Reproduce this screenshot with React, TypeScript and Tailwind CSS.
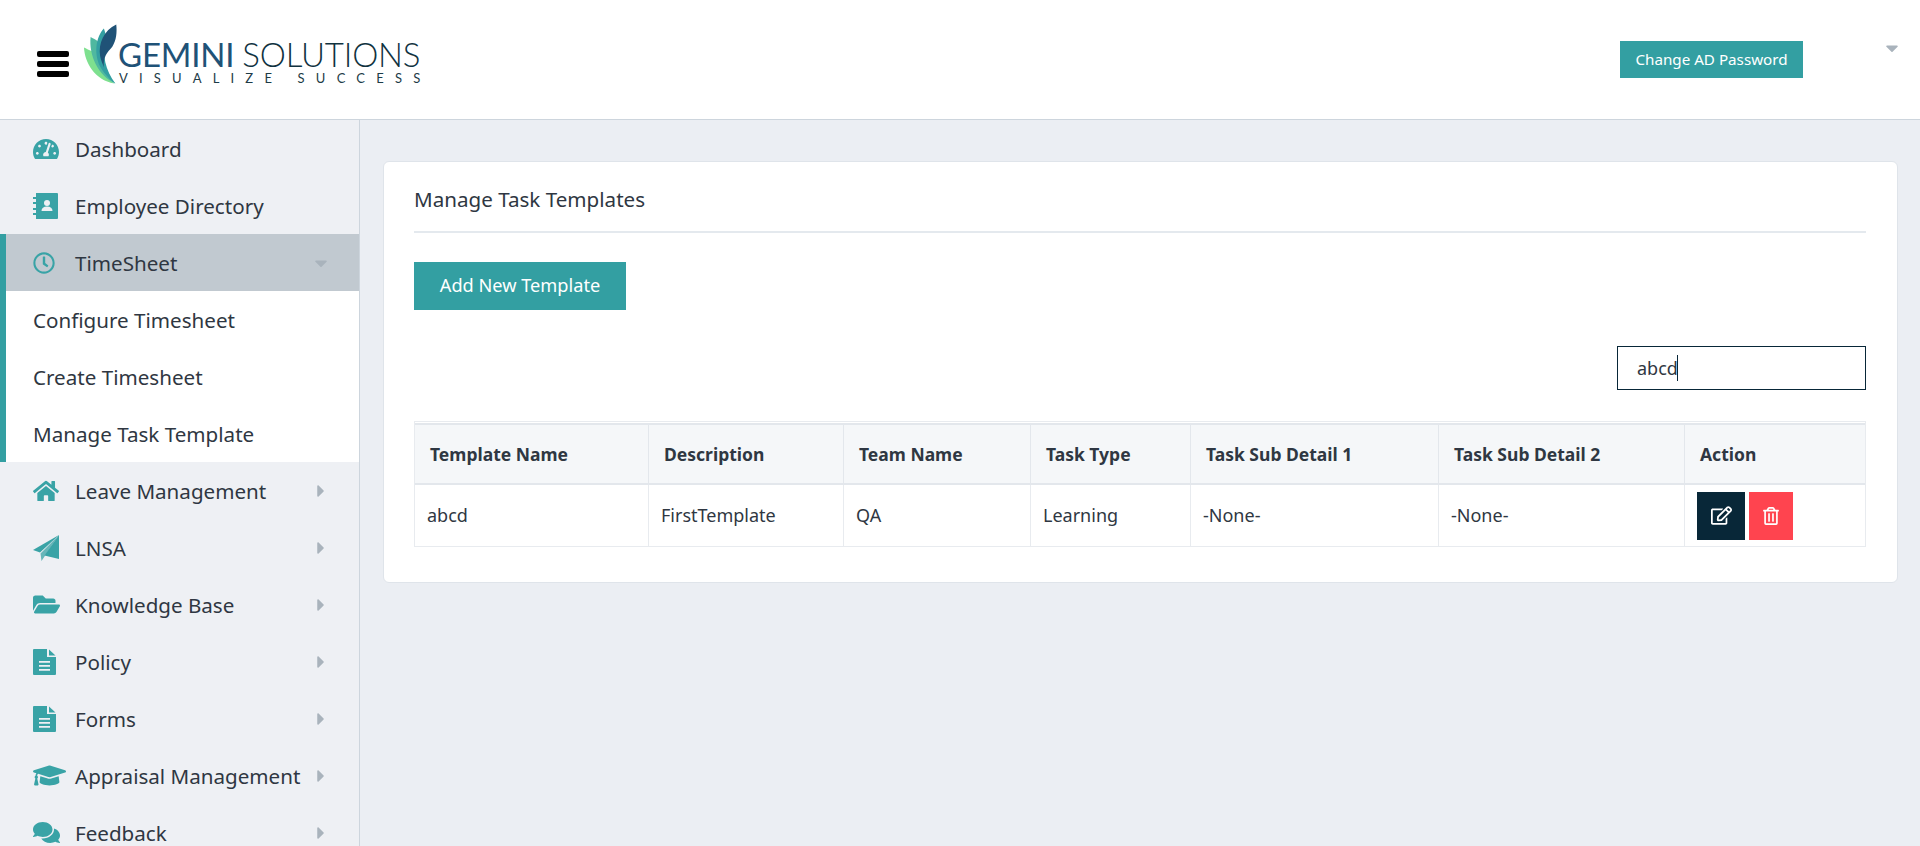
import { ReactNode } from "react";
import {
  FaCaretDown,
  FaCaretRight,
  FaComments,
  FaFolderOpen,
  FaGraduationCap,
  FaHome,
  FaRegClock,
  FaRegEdit,
  FaRegTrashAlt,
  FaTachometerAlt,
} from "react-icons/fa";

const COLUMNS = [
  { name: "Template Name", value: "abcd", width: "w-[234px]" },
  { name: "Description", value: "FirstTemplate", width: "w-[195px]" },
  { name: "Team Name", value: "QA", width: "w-[187px]" },
  { name: "Task Type", value: "Learning", width: "w-[160px]" },
  { name: "Task Sub Detail 1", value: "-None-", width: "w-[248px]" },
  { name: "Task Sub Detail 2", value: "-None-", width: "w-[246px]" },
];

function DirectoryIcon() {
  return (
    <svg viewBox="0 0 25 26" className="h-[26px] w-[25px]" fill="currentColor">
      <path d="M3 0H24a1 1 0 0 1 1 1V25a1 1 0 0 1-1 1H3z" />
      <path d="M0 4h5v2H0zM0 9h5v2H0zM0 15h5v2H0zM0 20h5v2H0z" />
      <circle cx="14" cy="10" r="3" fill="#eef0f4" />
      <path d="M8.5 18c0-3 2-4.5 5.5-4.5s5.5 1.5 5.5 4.5z" fill="#eef0f4" />
    </svg>
  );
}

function PlaneIcon() {
  return (
    <svg viewBox="0 0 26 26" className="h-[26px] w-[26px]" fill="currentColor">
      <path d="M26 0L0 15l7 2.5z" />
      <path d="M26 0L11.5 20.5 26 24z" />
      <path d="M26 0L7.5 18.5 8.5 26l3-4.5z" opacity="0.75" />
    </svg>
  );
}

function FileIcon() {
  return (
    <svg viewBox="0 0 23 26" className="h-[26px] w-[23px]" fill="currentColor">
      <path d="M1 0H14V8H23V25a1 1 0 0 1-1 1H1a1 1 0 0 1-1-1V1a1 1 0 0 1 1-1z" />
      <path d="M16 0.5L22.5 6.5H16z" />
      <path d="M6 12h11v1.8H6zM6 16h11v1.8H6zM6 20h11v1.8H6z" fill="#eef0f4" />
    </svg>
  );
}

function NavItem({ icon, label, open, plain }: { icon: ReactNode; label: string; open?: boolean; plain?: boolean }) {
  return (
    <div className={`flex h-[57px] shrink-0 items-center pl-[33px] pr-[28px] ${open ? "border-l-[6px] border-[#339fa2] bg-[#c1c9d0] !pl-[27px]" : ""}`}>
      <span className="flex w-[42px] shrink-0 items-center text-[#39a3a6]">{icon}</span>
      <span className="relative top-px flex-1 whitespace-nowrap text-[#2f3742]">{label}</span>
      {plain ? null : open ? <FaCaretDown className="text-[20px] text-[#a9b3bc]" /> : <FaCaretRight className="text-[20px] text-[#a9b3bc]" />}
    </div>
  );
}

function SubItem({ label }: { label: string }) {
  return <div className="flex h-[57px] items-center pl-[27px] pt-px text-[#2f3742]">{label}</div>;
}

function Logo() {
  return (
    <div className="flex items-start">
      <svg viewBox="0 0 40 64" className="mt-[23px] h-[64px] w-[38px] shrink-0">
        <path d="M1 24C2 40 12 58 33 62C22 54 13 42 10 28C7 27 3 25 1 24Z" fill="#7ee08f" />
        <path d="M8 13C6 32 16 54 34 62C24 50 17 36 16 18C14 16 10 14 8 13Z" fill="#4fb8a0" />
        <path d="M22 4C14 12 11 30 18 44C22 51 28 58 34 62C24 48 19 32 25 14C24 10 23 7 22 4Z" fill="#339fa2" />
        <path d="M35 0C22 6 16 20 18 33C19 38 21 42 22 45C21 34 25 30 31 23C35 17 36 8 35 0Z" fill="#1f5277" />
      </svg>
      <div className="ml-[-3px] mt-[38px] flex flex-col font-['Lato',sans-serif]">
        <div className="flex h-[32px] items-center whitespace-nowrap text-[33px] leading-none tracking-[-0.2px]">
          <span className="font-normal text-[#1f5277]">GEMINI</span>
          <span className="ml-[8px] font-light text-[#10323f]">SOLUTIONS</span>
        </div>
        <div className="mt-[1px] whitespace-nowrap pl-[1px] text-[13px] leading-[15px] tracking-[11.2px] text-[#1d3b47]">VISUALIZE SUCCESS</div>
      </div>
    </div>
  );
}

export default function App() {
  return (
    <div className="flex h-screen flex-col overflow-hidden bg-[#ebeef3] font-['Noto_Sans',sans-serif] text-[20.6px]">
      <header className="flex h-[120px] shrink-0 items-start border-b border-[#cdd5dd] bg-white">
        <div className="mt-[51px] ml-[37px] mr-[14px] flex w-[32px] shrink-0 flex-col gap-[4px]">
          <span className="h-[6px] rounded-[2px] bg-black" />
          <span className="h-[6px] rounded-[2px] bg-black" />
          <span className="h-[6px] rounded-[2px] bg-black" />
        </div>
        <Logo />
        <button className="ml-auto mt-[41px] h-[37px] w-[183px] bg-[#339fa2] text-[15.2px] text-white">Change AD Password</button>
        <FaCaretDown className="mr-[18px] ml-[79px] mt-[38px] text-[20px] text-[#a9b3bc]" />
      </header>

      <div className="flex min-h-0 flex-1">
        <aside className="flex w-[360px] shrink-0 flex-col border-r border-[#cdd5dd] bg-[#eef0f4]">
          <NavItem icon={<FaTachometerAlt className="text-[26px]" />} label="Dashboard" plain />
          <NavItem icon={<DirectoryIcon />} label="Employee Directory" plain />
          <NavItem icon={<FaRegClock className="text-[22px]" />} label="TimeSheet" open />
          <div className="shrink-0 border-l-[6px] border-[#339fa2] bg-white">
            <SubItem label="Configure Timesheet" />
            <SubItem label="Create Timesheet" />
            <SubItem label="Manage Task Template" />
          </div>
          <NavItem icon={<FaHome className="text-[26px]" />} label="Leave Management" />
          <NavItem icon={<PlaneIcon />} label="LNSA" />
          <NavItem icon={<FaFolderOpen className="text-[27px]" />} label="Knowledge Base" />
          <NavItem icon={<FileIcon />} label="Policy" />
          <NavItem icon={<FileIcon />} label="Forms" />
          <NavItem icon={<FaGraduationCap className="text-[33px]" />} label="Appraisal Management" />
          <NavItem icon={<FaComments className="text-[27px]" />} label="Feedback" />
        </aside>

        <main className="flex-1 pl-[23px] pr-[22px] pt-[41px]">
          <section className="h-[422px] rounded-[6px] border border-[#dfe4ea] bg-white pl-[30px] pr-[31px] pt-[20px]">
            <h1 className="flex h-[51px] items-center border-b-2 border-[#e4e9ee] pb-[14px] text-[20.6px] font-normal text-[#2f3742]">Manage Task Templates</h1>
            <button className="mt-[29px] block h-[48px] w-[212px] bg-[#339fa2] text-[18.2px] text-white">Add New Template</button>
            <div className="mt-[36px] flex justify-end">
              <div className="relative">
                <input
                  readOnly
                  value="abcd"
                  className="h-[44px] w-[249px] border border-[#082738] bg-white pl-[19px] text-[18px] text-[#2f3742] outline-none"
                />
                <span className="absolute left-[60px] top-[9px] h-[26px] w-px bg-[#082738]" />
              </div>
            </div>
            <table className="mt-[31px] w-[1452px] table-fixed border-separate border-spacing-0 border border-[#e8ebef] pt-px text-[18px] text-[#2f3742]">
              <thead>
                <tr>
                  {COLUMNS.map((c) => (
                    <th
                      key={c.name}
                      className={`${c.width} h-[62px] border-r border-t-2 border-b-2 border-[#e3e7ec] bg-[#f5f7f9] pl-[15px] text-left text-[17.5px] font-bold`}
                    >
                      {c.name}
                    </th>
                  ))}
                  <th className="border-t-2 border-b-2 border-[#e3e7ec] bg-[#f5f7f9] pl-[15px] text-left text-[17.5px] font-bold">Action</th>
                </tr>
              </thead>
              <tbody>
                <tr>
                  {COLUMNS.map((c) => (
                    <td key={c.name} className="h-[61px] border-r border-[#e8ebef] pl-[12px]">
                      {c.value}
                    </td>
                  ))}
                  <td className="pl-[12px]">
                    <div className="flex gap-[4px]">
                      <button className="flex h-[48px] w-[48px] items-center justify-center bg-[#082738] text-[21px] text-white">
                        <FaRegEdit />
                      </button>
                      <button className="flex h-[48px] w-[44px] items-center justify-center bg-[#ff444f] text-[18px] text-white">
                        <FaRegTrashAlt />
                      </button>
                    </div>
                  </td>
                </tr>
              </tbody>
            </table>
          </section>
        </main>
      </div>
    </div>
  );
}
